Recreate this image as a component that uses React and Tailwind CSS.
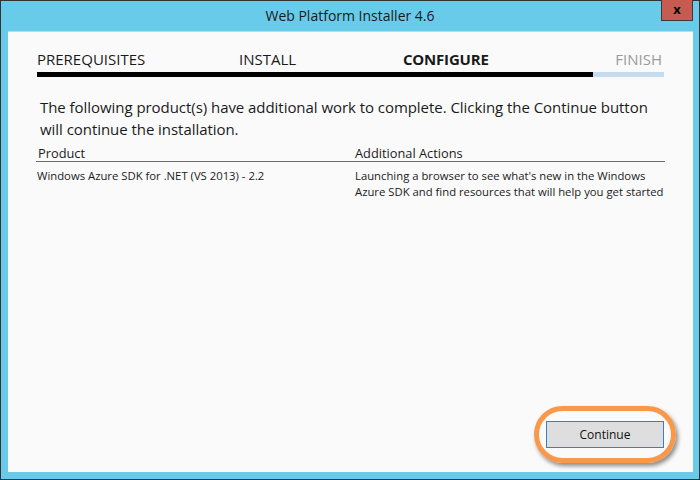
export default function App() {
  const font = { fontFamily: '"Open Sans", "Noto Sans", sans-serif' };
  return (
    <div className="relative w-[700px] h-[480px] bg-[#333333] p-[1px]" style={font}>
      <div className="flex flex-col w-full h-full bg-[#69cbea]">
        <div className="h-[30px] flex items-center justify-center text-[14px] text-[#1a1a1a] pb-[2px]">
          Web Platform Installer 4.6
        </div>
        <div className="flex-1 ml-[7px] mr-[6px] mb-[7px] bg-[#fafafa] border-t border-[#c8d8e0] flex flex-col px-[29px]">
          <div className="mt-[17px] flex text-[15px] leading-[20px]">
            <div className="w-[202px] text-[#1a1a1a]">PREREQUISITES</div>
            <div className="w-[164px] text-[#1a1a1a]">INSTALL</div>
            <div className="font-bold text-[#1a1a1a] tracking-[-0.2px]">CONFIGURE</div>
            <div className="flex-1 text-right text-[#9a9a9a] pr-[2px]">FINISH</div>
          </div>
          <div className="mt-[3px] flex h-[5px]">
            <div className="w-[556px] bg-black"></div>
            <div className="flex-1 bg-[#c5dcee]"></div>
          </div>
          <div className="mt-[19px] pl-[3px] text-[15px] leading-[22px] text-[#1a1a1a] tracking-[-0.05px]">
            The following product(s) have additional work to complete. Clicking the Continue button will continue the installation.
          </div>
          <div className="mt-[5px] flex text-[12.8px] leading-[16px] text-[#1a1a1a] border-b border-[#6a6a6a] -mx-[1px] px-[1px]">
            <div className="w-[318px] pl-[1px]">Product</div>
            <div className="flex-1">Additional Actions</div>
          </div>
          <div className="mt-[6px] flex text-[11.3px] leading-[16px] text-[#1a1a1a]">
            <div className="w-[318px]">Windows Azure SDK for .NET (VS 2013) - 2.2</div>
            <div className="flex-1">
              Launching a browser to see what's new in the Windows Azure SDK and find resources that will help you get started
            </div>
          </div>
          <div className="flex-1"></div>
          <div className="flex justify-end pb-[24px]">
            <div className="relative">
              <div className="absolute -left-[12px] -right-[12px] -top-[15px] -bottom-[15px] rounded-full border-[5px] border-[#f7984a] shadow-[2px_3px_4px_rgba(0,0,0,0.45)]"></div>
              <div className="relative w-[118px] h-[27px] bg-[#dedede] border border-[#3f7fb7] flex items-center justify-center text-[12px] text-[#111]">
                Continue
              </div>
            </div>
          </div>
        </div>
      </div>
      <div className="absolute left-[661px] top-0 w-[32px] h-[21px] bg-[#c75b50] border border-[#3a3a3a] border-t-0 flex items-center justify-center text-[13px] font-bold text-black leading-none pb-[2px]">
        x
      </div>
    </div>
  );
}
